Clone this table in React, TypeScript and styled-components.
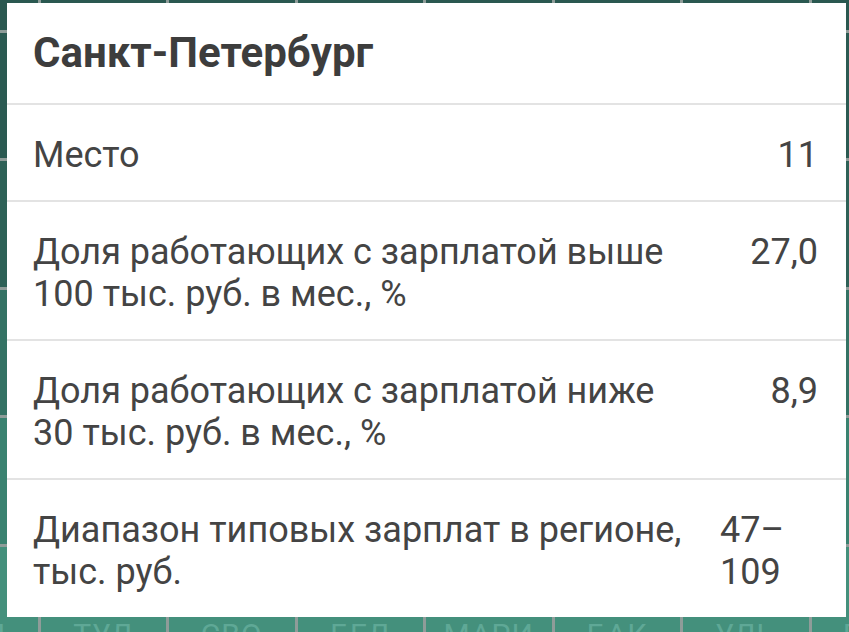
import { createGlobalStyle } from 'styled-components';
import styled from 'styled-components';

const GlobalStyle = createGlobalStyle`
    html, body {
        margin: 0;
        padding: 0;
        width: 849px;
        height: 632px;
        overflow: hidden;
        font-family: Roboto, "Noto Sans", Arial, sans-serif;
    }
`;

const ROW_COLORS = ['#2a5850', '#2b5a52', '#2e6157', '#347264', '#3a8270', '#44907c'];

const MAP_ROWS: string[][] = [
    ['', '', '', '', '', '', '', ''],
    ['', '', '', '', '', '', '', ''],
    ['', '', '', '', '', '', '', ''],
    ['', '', '', '', '', '', '', ''],
    ['', '', '', '', '', '', '', ''],
    ['ОРЛ', 'ТУЛ', 'СВО', 'БЕЛ', 'МАРИ', 'БАК', 'УЛЬ', 'ПЕН']
];

const ROWS = [
    { label: 'Место', value: '11' },
    { label: 'Доля работающих с зарплатой выше 100 тыс. руб. в мес., %', value: '27,0' },
    { label: 'Доля работающих с зарплатой ниже 30 тыс. руб. в мес., %', value: '8,9' },
    { label: 'Диапазон типовых зарплат в регионе, тыс. руб.', value: '47–109', leftAligned: true }
];

const Screen = styled.div`
    position: relative;
    width: 849px;
    height: 632px;
    overflow: hidden;
    background: #8f9c99;
`;

const TileGrid = styled.div`
    display: grid;
    grid-template-columns: repeat(8, 125.5px);
    grid-auto-rows: 125.5px;
    gap: 3px;
    margin: -96px 0 0 -88px;
`;

const Tile = styled.div<{ $color: string }>`
    background: ${p => p.$color};
    display: flex;
    justify-content: center;
    padding-top: 70px;
    box-sizing: border-box;
    font-size: 30px;
    color: #5fa896;
    letter-spacing: 1px;
`;

const Card = styled.div`
    position: absolute;
    left: 7px;
    top: 3px;
    width: 839px;
    height: 614px;
    background: #fff;
    color: #444;
    display: flex;
    flex-direction: column;
`;

const Header = styled.div`
    height: 102px;
    display: flex;
    align-items: center;
    padding: 0 27px 2px 26px;
    box-sizing: border-box;
    border-bottom: 2px solid #e3e3e3;
    font-size: 42px;
    font-weight: 700;
    color: #3d3d3d;
`;

const Row = styled.div`
    display: flex;
    align-items: flex-start;
    gap: 36px;
    padding: 29px 28px 24px 26px;
    border-bottom: 2px solid #e3e3e3;
    font-size: 36px;
    line-height: 42px;

    &:last-child {
        border-bottom: none;
    }
`;

const Label = styled.div`
    flex: 1;
`;

const Value = styled.div<{ $left?: boolean }>`
    width: 98px;
    flex-shrink: 0;
    text-align: ${p => (p.$left ? 'left' : 'right')};
`;

export default function App() {
    return (
        <>
            <GlobalStyle />
            <Screen>
                <TileGrid>
                    {MAP_ROWS.map((cells, r) =>
                        cells.map((name, c) => (
                            <Tile key={`${r}-${c}`} $color={ROW_COLORS[r]}>
                                {name}
                            </Tile>
                        ))
                    )}
                </TileGrid>
                <Card>
                    <Header>Санкт-Петербург</Header>
                    {ROWS.map(row => (
                        <Row key={row.label}>
                            <Label>{row.label}</Label>
                            <Value $left={row.leftAligned}>{row.value}</Value>
                        </Row>
                    ))}
                </Card>
            </Screen>
        </>
    );
}
